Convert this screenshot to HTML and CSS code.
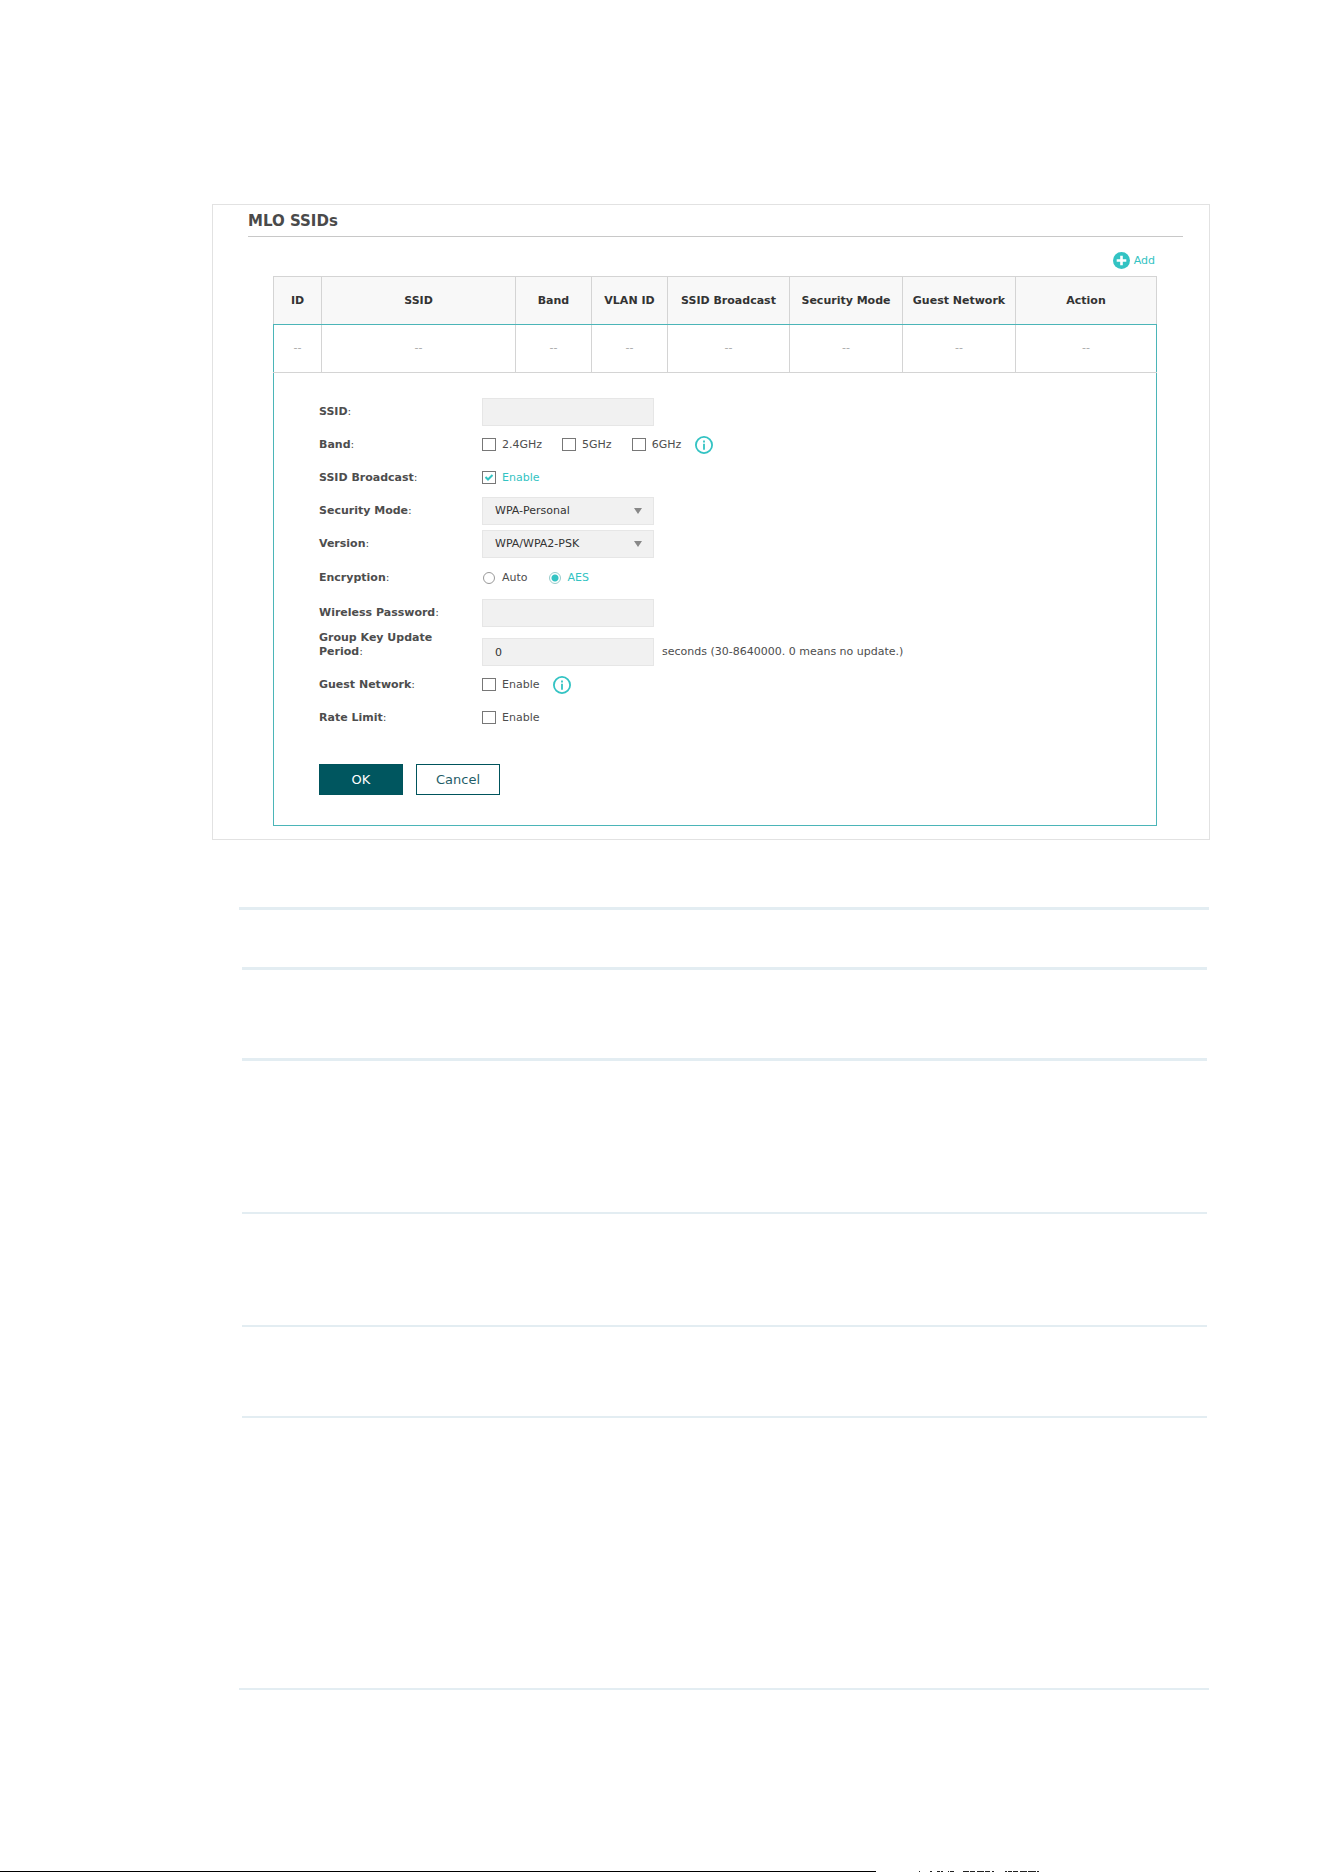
FILE: index.html
```html
<!DOCTYPE html>
<html lang="en">
<head>
    <meta charset="UTF-8">
    <meta name="viewport" content="width=device-width, initial-scale=1.0">
    <title>MLO SSIDs</title>
    <link rel="stylesheet" href="styles.css">
</head>
<body>
    <main class="page">
        <section class="panel">
            <h2 class="panel-title">MLO SSIDs</h2>
            <div class="panel-body">
                <div class="toolbar">
                    <button type="button" class="add-button">
                        <svg width="17" height="17" viewBox="0 0 17 17" aria-hidden="true">
                            <circle cx="8.5" cy="8.5" r="8.5" fill="#33c3c3"/>
                            <path d="M8.5 3.7v9.6M3.7 8.5h9.6" stroke="#fff" stroke-width="2.6"/>
                        </svg>
                        Add
                    </button>
                </div>
                <table class="ssid-table">
                    <colgroup>
                        <col class="col-id">
                        <col class="col-ssid">
                        <col class="col-short">
                        <col class="col-short">
                        <col class="col-broadcast">
                        <col class="col-mode">
                        <col class="col-mode">
                        <col>
                    </colgroup>
                    <thead>
                        <tr>
                            <th>ID</th>
                            <th>SSID</th>
                            <th>Band</th>
                            <th>VLAN ID</th>
                            <th>SSID Broadcast</th>
                            <th>Security Mode</th>
                            <th>Guest Network</th>
                            <th>Action</th>
                        </tr>
                    </thead>
                    <tbody>
                        <tr>
                            <td>--</td>
                            <td>--</td>
                            <td>--</td>
                            <td>--</td>
                            <td>--</td>
                            <td>--</td>
                            <td>--</td>
                            <td>--</td>
                        </tr>
                    </tbody>
                </table>
                <form class="ssid-form">
                    <div class="row">
                        <label class="row-label" for="ssid"><b>SSID</b>:</label>
                        <input class="field" type="text" id="ssid">
                    </div>
                    <div class="row" role="group" aria-labelledby="band-label">
                        <span class="row-label" id="band-label"><b>Band</b>:</span>
                        <div class="options">
                            <label class="option"><input type="checkbox" name="band"><span>2.4GHz</span></label>
                            <label class="option"><input type="checkbox" name="band"><span>5GHz</span></label>
                            <label class="option"><input type="checkbox" name="band"><span>6GHz</span></label>
                        </div>
                        <svg class="info" width="18" height="18" viewBox="0 0 18 18" aria-hidden="true">
                            <circle cx="9" cy="9" r="8.1" fill="none" stroke="#33c3c3" stroke-width="1.8"/>
                            <path d="M9 4.4v2M9 7.8v6" stroke="#33c3c3" stroke-width="1.8"/>
                        </svg>
                    </div>
                    <div class="row">
                        <span class="row-label"><b>SSID Broadcast</b>:</span>
                        <label class="option"><input type="checkbox" name="broadcast" checked><span>Enable</span></label>
                    </div>
                    <div class="row">
                        <label class="row-label" for="security"><b>Security Mode</b>:</label>
                        <select class="field" id="security">
                            <option>WPA-Personal</option>
                        </select>
                    </div>
                    <div class="row">
                        <label class="row-label" for="version"><b>Version</b>:</label>
                        <select class="field" id="version">
                            <option>WPA/WPA2-PSK</option>
                        </select>
                    </div>
                    <div class="row row-tall" role="group" aria-labelledby="encryption-label">
                        <span class="row-label" id="encryption-label"><b>Encryption</b>:</span>
                        <div class="options">
                            <label class="option"><input type="radio" name="encryption"><span>Auto</span></label>
                            <label class="option"><input type="radio" name="encryption" checked><span>AES</span></label>
                        </div>
                    </div>
                    <div class="row row-tall">
                        <label class="row-label" for="password"><b>Wireless Password</b>:</label>
                        <input class="field" type="password" id="password">
                    </div>
                    <div class="row row-period">
                        <label class="row-label" for="period"><b>Group Key Update Period</b>:</label>
                        <div class="period">
                            <input class="field" type="text" id="period" value="0">
                            <span>seconds (30-8640000. 0 means no update.)</span>
                        </div>
                    </div>
                    <div class="row">
                        <span class="row-label"><b>Guest Network</b>:</span>
                        <label class="option"><input type="checkbox" name="guest"><span>Enable</span></label>
                        <svg class="info" width="18" height="18" viewBox="0 0 18 18" aria-hidden="true">
                            <circle cx="9" cy="9" r="8.1" fill="none" stroke="#33c3c3" stroke-width="1.8"/>
                            <path d="M9 4.4v2M9 7.8v6" stroke="#33c3c3" stroke-width="1.8"/>
                        </svg>
                    </div>
                    <div class="row">
                        <span class="row-label"><b>Rate Limit</b>:</span>
                        <label class="option"><input type="checkbox" name="rate"><span>Enable</span></label>
                    </div>
                    <div class="buttons">
                        <button type="button" class="button button-primary">OK</button>
                        <button type="button" class="button">Cancel</button>
                    </div>
                </form>
            </div>
        </section>

        <!-- Description table, rules only -->
        <div class="rules">
            <div class="rule rule-head"></div>
            <div class="rule rule-ssid"></div>
            <div class="rule rule-band"></div>
            <div class="rule rule-broadcast"></div>
            <div class="rule rule-mode"></div>
            <div class="rule rule-version"></div>
            <div class="rule rule-last"></div>
        </div>
    </main>
    <footer class="footer">
        <div class="footer-line"></div>
        <svg class="footer-marks" width="120" height="1" viewBox="0 0 120 1" aria-hidden="true">
            <path d="M0 .5h1M11 .5h2M18 .5h3M22 .5h2M29 .5h1M31 .5h4M44 .5h6M51 .5h5M58 .5h7M66 .5h5M73 .5h2M86 .5h2M89 .5h4M94 .5h5M101 .5h7M109 .5h8M118 .5h2" stroke="#222"/>
        </svg>
    </footer>
</body>
</html>
```

FILE: styles.css
```css
* {
    box-sizing: border-box;
}
body {
    margin: 0;
    min-height: 100vh;
    display: flex;
    flex-direction: column;
    background-color: #fff;
    font-family: "DejaVu Sans", Verdana, sans-serif;
    font-size: 11px;
    line-height: 14px;
    color: #4d4d4d;
}
button,
input,
select {
    font-family: inherit;
    font-size: inherit;
}
.page {
    flex: 1;
    padding: 204px 114px 0 212px;
}

/* Panel */
.panel {
    border: 1px solid #e2e2e2;
    padding: 0 26px 13px 35px;
}
.panel-title {
    margin: 0;
    padding: 9px 0 7px;
    border-bottom: 1px solid #c8c8c8;
    font-size: 15px;
    line-height: 15px;
    color: #4a4a4a;
}
.panel-body {
    padding: 0 26px 0 25px;
}
.toolbar {
    display: flex;
    justify-content: flex-end;
    padding: 15px 2px 7px;
}
.add-button {
    display: flex;
    align-items: center;
    gap: 4px;
    padding: 0;
    border: none;
    background: none;
    color: #33c3c3;
    cursor: pointer;
}

/* Table */
.ssid-table {
    width: 100%;
    table-layout: fixed;
    border-collapse: collapse;
}
.col-id {
    width: 48px;
}
.col-ssid {
    width: 194px;
}
.col-short {
    width: 76px;
}
.col-broadcast {
    width: 122px;
}
.col-mode {
    width: 113px;
}
.ssid-table th,
.ssid-table td {
    height: 48px;
    padding: 0;
    border: 1px solid #d4d4d4;
    text-align: center;
    white-space: nowrap;
}
.ssid-table th {
    background-color: #f8f8f8;
    color: #333;
    border-bottom-color: #4bb5b8;
}
.ssid-table td {
    padding-bottom: 2px;
    color: #aaa;
    border-top-color: #4bb5b8;
}
.ssid-table td:first-child {
    border-left-color: #4bb5b8;
}
.ssid-table td:last-child {
    border-right-color: #4bb5b8;
}

/* Form */
.ssid-form {
    padding: 22px 45px 30px;
    border: 1px solid #4bb5b8;
    border-top: none;
}
.row {
    display: flex;
    align-items: center;
    min-height: 33px;
}
.row-tall {
    min-height: 35px;
}
.row-label {
    width: 163px;
    padding-right: 24px;
}
.field {
    width: 172px;
    height: 28px;
    padding: 0 12px;
    border: 1px solid #e6e6e6;
    border-radius: 0;
    background-color: #f1f1f1;
    color: #333;
}
select.field {
    appearance: none;
    background-image: url("data:image/svg+xml,%3Csvg xmlns='http://www.w3.org/2000/svg' width='8' height='6'%3E%3Cpath d='M0 0h8L4 6z' fill='%23888'/%3E%3C/svg%3E");
    background-repeat: no-repeat;
    background-position: right 11px center;
}
.options {
    display: flex;
    gap: 20px;
}
.option {
    display: flex;
    align-items: center;
    gap: 6px;
}
.option input {
    appearance: none;
    margin: 0;
    width: 14px;
    height: 13px;
    border: 1px solid #777;
    background: #fff no-repeat center;
}
.option input[type="radio"] {
    width: 12px;
    height: 12px;
    margin: 0 1px;
    border-color: #999;
    border-radius: 50%;
}
.option input[type="checkbox"]:checked {
    background-image: url("data:image/svg+xml,%3Csvg xmlns='http://www.w3.org/2000/svg' width='10' height='9'%3E%3Cpath d='M1.5 4l2.5 2.5L8.5 2' fill='none' stroke='%2333c3c3' stroke-width='2'/%3E%3C/svg%3E");
}
.option input[type="radio"]:checked {
    border-color: #9cc;
    background-image: radial-gradient(circle, #33c3c3 3px, #fff 4px);
}
.option input:checked + span {
    color: #33c3c3;
}
.info {
    margin-left: 14px;
}
.row-period {
    align-items: flex-start;
    min-height: 38px;
}
.row-period .row-label {
    padding-top: 1px;
}
.period {
    display: flex;
    align-items: center;
    gap: 8px;
    padding-top: 8px;
}
.buttons {
    display: flex;
    gap: 13px;
    margin-top: 30px;
}
.button {
    width: 84px;
    height: 31px;
    padding: 0 0 1px;
    border: 1px solid #00545c;
    background-color: #fff;
    color: #1f5d68;
    font-size: 13px;
    cursor: pointer;
}
.button-primary {
    background-color: #00565f;
    color: #fff;
}

/* Description rules */
.rules {
    margin: 67px 1px 0 27px;
}
.rule {
    margin: 0 2px 0 3px;
    border-top: 3px solid #e3edf2;
}
.rule-head {
    height: 60px;
    margin: 0;
}
.rule-ssid {
    height: 91px;
}
.rule-band {
    height: 154px;
}
.rule-broadcast {
    height: 113px;
    border-top-width: 2px;
}
.rule-mode {
    height: 91px;
    border-top-width: 2px;
}
.rule-version {
    height: 272px;
    border-top-width: 2px;
}
.rule-last {
    margin: 0;
    border-top-width: 2px;
}

/* Footer */
.footer {
    display: flex;
    height: 1px;
}
.footer-line {
    width: 66.2%;
    background-color: #000;
}
.footer-marks {
    margin-left: 43px;
}
```
